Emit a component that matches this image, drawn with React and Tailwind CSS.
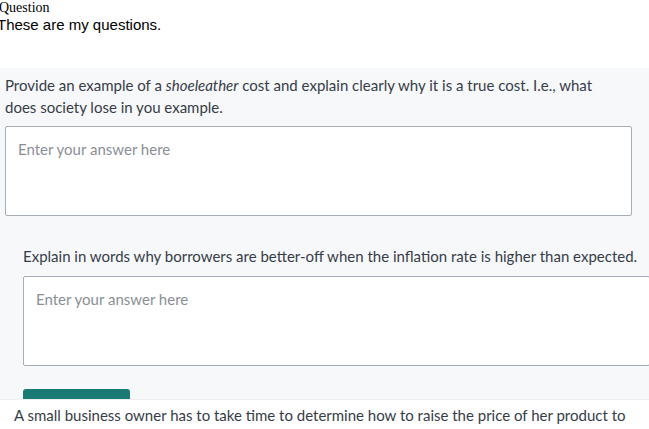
export default function App() {
  const sans = { fontFamily: 'Lato, "Open Sans", sans-serif' };
  return (
    <div className="w-[649px] h-[429px] overflow-hidden bg-white relative">
      <div className="-ml-[1px] text-[14px] leading-[16px] text-black" style={{ fontFamily: '"Liberation Serif", serif' }}>Question</div>
      <div className="-ml-[3px] text-[15px] leading-[17px] text-black" style={{ fontFamily: '"Liberation Sans", Arial, sans-serif' }}>These are my questions.</div>
      <div className="mt-[35px] bg-[#f7f8fa] h-[400px] pt-[6px]" style={sans}>
        <div className="pl-[5px]">
          <p className="text-[15px] leading-[22px] text-[#363d47] pr-[40px]">
            Provide an example of a <em>shoeleather</em> cost and explain clearly why it is a true cost. I.e., what does society lose in you example.
          </p>
          <div className="mt-[8px] w-[627px] h-[90px] border border-[#a7adb5] bg-white rounded-[2px] px-[12px] pt-[11px] text-[15px] leading-[22px] text-[#8a8f96]">
            Enter your answer here
          </div>
          <div className="pl-[18px] mt-[29px]">
            <p className="text-[15px] leading-[22px] text-[#363d47] whitespace-nowrap">
              Explain in words why borrowers are better-off when the inflation rate is higher than expected.
            </p>
            <div className="mt-[9px] w-[627px] h-[90px] border border-[#a7adb5] bg-white rounded-[2px] px-[12px] pt-[11px] text-[15px] leading-[22px] text-[#8a8f96]">
              Enter your answer here
            </div>
            <div className="mt-[23px] w-[107px] h-[36px] bg-[#1a7a74] rounded-[3px]" />
          </div>
        </div>
      </div>
      <div className="absolute left-0 right-0 top-[399px] h-[30px] bg-white border-t border-[#eceef1] pl-[14px] pt-[4px] text-[15px] leading-[22px] text-[#363d47] whitespace-nowrap" style={sans}>
        A small business owner has to take time to determine how to raise the price of her product to
      </div>
    </div>
  );
}
